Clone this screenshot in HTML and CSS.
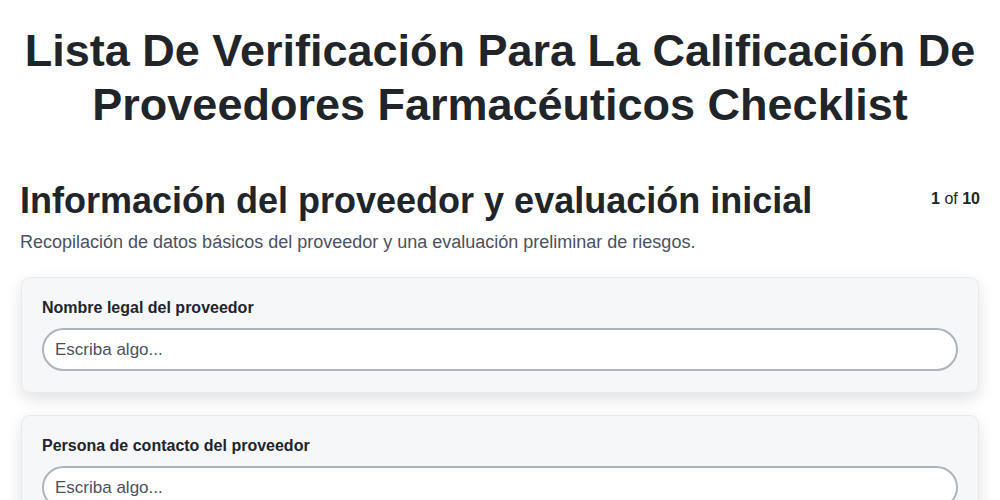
FILE: index.html
```html
<!DOCTYPE html>
<html lang="es">
<head>
<meta charset="utf-8">
<title>Checklist</title>
<link rel="stylesheet" href="styles.css">
</head>
<body>
<main class="page">
  <h1 class="title">Lista De Verificación Para La Calificación De Proveedores Farmacéuticos Checklist</h1>
  <section class="section">
    <div class="section-head">
      <h2 class="section-title">Información del proveedor y evaluación inicial</h2>
      <div class="pager"><b>1</b> of <b>10</b></div>
    </div>
    <p class="section-desc">Recopilación de datos básicos del proveedor y una evaluación preliminar de riesgos.</p>
    <div class="cards">
      <div class="card">
        <label class="card-label">Nombre legal del proveedor</label>
        <input class="card-input" type="text" placeholder="Escriba algo...">
      </div>
      <div class="card">
        <label class="card-label">Persona de contacto del proveedor</label>
        <input class="card-input" type="text" placeholder="Escriba algo...">
      </div>
      <div class="card">
        <label class="card-label">Dirección del proveedor</label>
        <input class="card-input" type="text" placeholder="Escriba algo...">
      </div>
    </div>
  </section>
</main>
</body>
</html>
```
FILE: styles.css
```css
* { box-sizing: border-box; }
html, body { margin: 0; padding: 0; background: #fff; }
body {
  font-family: "Liberation Sans", Arial, sans-serif;
  color: #212529;
}
.page {
  padding: 24px 20px 20px 20px;
}
.title {
  margin: 0;
  text-align: center;
  font-size: 45px;
  line-height: 54px;
  font-weight: 700;
  color: #212529;
}
.section {
  margin-top: 47px;
}
.section-head {
  display: flex;
  justify-content: space-between;
  align-items: flex-start;
}
.section-title {
  margin: 0;
  font-size: 36px;
  line-height: 43px;
  font-weight: 700;
}
.pager {
  font-size: 16px;
  line-height: 24px;
  margin-top: 8px;
  color: #212529;
}
.section-desc {
  margin: 7px 0 0 0;
  font-size: 18px;
  line-height: 27px;
  color: #4a5162;
}
.cards {
  margin: 21px 1px 0 1px;
  display: flex;
  flex-direction: column;
  gap: 22px;
}
.card {
  background: #f6f7f9;
  border: 1px solid #e8eaee;
  border-radius: 9px;
  padding: 18px 20px 21px 20px;
  box-shadow: 0 6px 16px rgba(0, 0, 0, 0.12);
  display: flex;
  flex-direction: column;
}
.card-label {
  font-size: 16px;
  line-height: 24px;
  font-weight: 700;
  color: #212529;
  margin-bottom: 8px;
}
.card-input {
  font-family: "Liberation Sans", Arial, sans-serif;
  font-size: 17px;
  line-height: 25px;
  height: 43px;
  padding: 7px 11px;
  border: 2px solid #adb4bc;
  border-radius: 22px;
  background: #fff;
  color: #212529;
  outline: none;
}
.card-input::placeholder {
  color: #4a5162;
  opacity: 1;
}
```
